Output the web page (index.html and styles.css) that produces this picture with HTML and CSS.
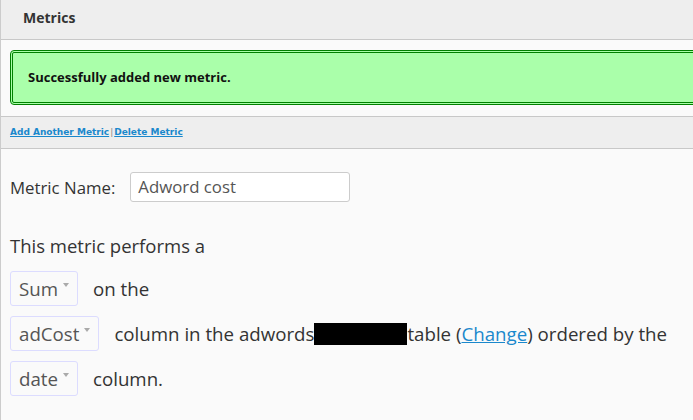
FILE: index.html
```html
<!DOCTYPE html>
<html>
<head>
<meta charset="utf-8">
<link rel="stylesheet" href="styles.css">
</head>
<body>
<div class="page">
  <div class="header">Metrics</div>
  <div class="notice-wrap">
    <div class="notice">Successfully added new metric.</div>
  </div>
  <div class="toolbar">
    <a href="#" class="tlink">Add Another Metric</a><span class="sep">|</span><a href="#" class="tlink">Delete Metric</a>
  </div>
  <div class="content">
    <div class="name-row">
      <label class="name-label">Metric Name:</label>
      <div class="name-input">Adword cost</div>
    </div>
    <p class="intro">This metric performs a</p>
    <div class="row">
      <span class="select">Sum <span class="arrow"></span></span>
      <span class="txt">on the</span>
    </div>
    <div class="row">
      <span class="select">adCost <span class="arrow"></span></span>
      <span class="txt">column in the adwords<span class="redact"></span>table (<a href="#" class="change">Change</a>) ordered by the</span>
    </div>
    <div class="row">
      <span class="select">date <span class="arrow"></span></span>
      <span class="txt">column.</span>
    </div>
  </div>
</div>
</body>
</html>
```
FILE: styles.css
```css
html, body {
  margin: 0;
  padding: 0;
  background: #fafafa;
}
body {
  font-family: "Open Sans", Lato, sans-serif;
  color: #333;
  overflow: hidden;
}
.page {
  border-left: 1px solid #cccccc;
  min-height: 420px;
  overflow: hidden;
}
.header {
  height: 39px;
  line-height: 36px;
  background: #eeeeee;
  border-bottom: 1px solid #c8c8c8;
  padding-left: 22px;
  font-weight: bold;
  font-size: 14px;
  color: #333;
}
.notice-wrap {
  padding: 10px 0 10px 9px;
  height: 56px;
}
.notice {
  margin-right: -30px;
  height: 49px;
  line-height: 49px;
  background: #aaffaa;
  border: 3px double #008000;
  border-radius: 4px;
  padding-left: 15px;
  font-weight: bold;
  font-size: 13px;
  color: #111;
}
.toolbar {
  height: 31px;
  line-height: 31px;
  background: #eeeeee;
  border-top: 1px solid #c8c8c8;
  border-bottom: 1px solid #c8c8c8;
  padding-left: 9px;
  font-family: "DejaVu Sans", Verdana, sans-serif;
  font-size: 9px;
  font-weight: bold;
}
.tlink {
  color: #1a88cc;
}
.sep {
  color: #888;
  font-weight: normal;
  margin: 0 1px;
}
.content {
  padding: 23px 0 0 9px;
}
.name-row {
  display: flex;
  align-items: center;
  gap: 15px;
  height: 30px;
}
.name-label {
  font-size: 16.8px;
  color: #333;
}
.name-input {
  width: 211px;
  height: 28px;
  line-height: 28px;
  background: #fff;
  border: 1px solid #cccccc;
  border-radius: 3px;
  padding-left: 7px;
  font-size: 16.8px;
  color: #555;
}
.intro {
  margin: 29px 0 0 0;
  font-size: 18.5px;
  line-height: 30px;
}
.row {
  display: flex;
  align-items: center;
  margin-top: 10px;
  height: 35px;
  font-size: 18.7px;
}
.select {
  display: inline-flex;
  align-items: center;
  height: 33px;
  border: 1px solid #dcdcff;
  border-radius: 3px;
  padding: 0 8px;
  color: #555;
  margin-right: 15px;
}
.arrow {
  display: inline-block;
  width: 0;
  height: 0;
  border-left: 3px solid transparent;
  border-right: 3px solid transparent;
  border-top: 4px solid #aaaaaa;
  margin-left: 5px;
  margin-top: -8px;
}
.txt {
  color: #333;
}
.redact {
  display: inline-block;
  width: 93px;
  height: 22px;
  background: #000;
  vertical-align: -4px;
}
.change {
  color: #1a88cc;
}
```
